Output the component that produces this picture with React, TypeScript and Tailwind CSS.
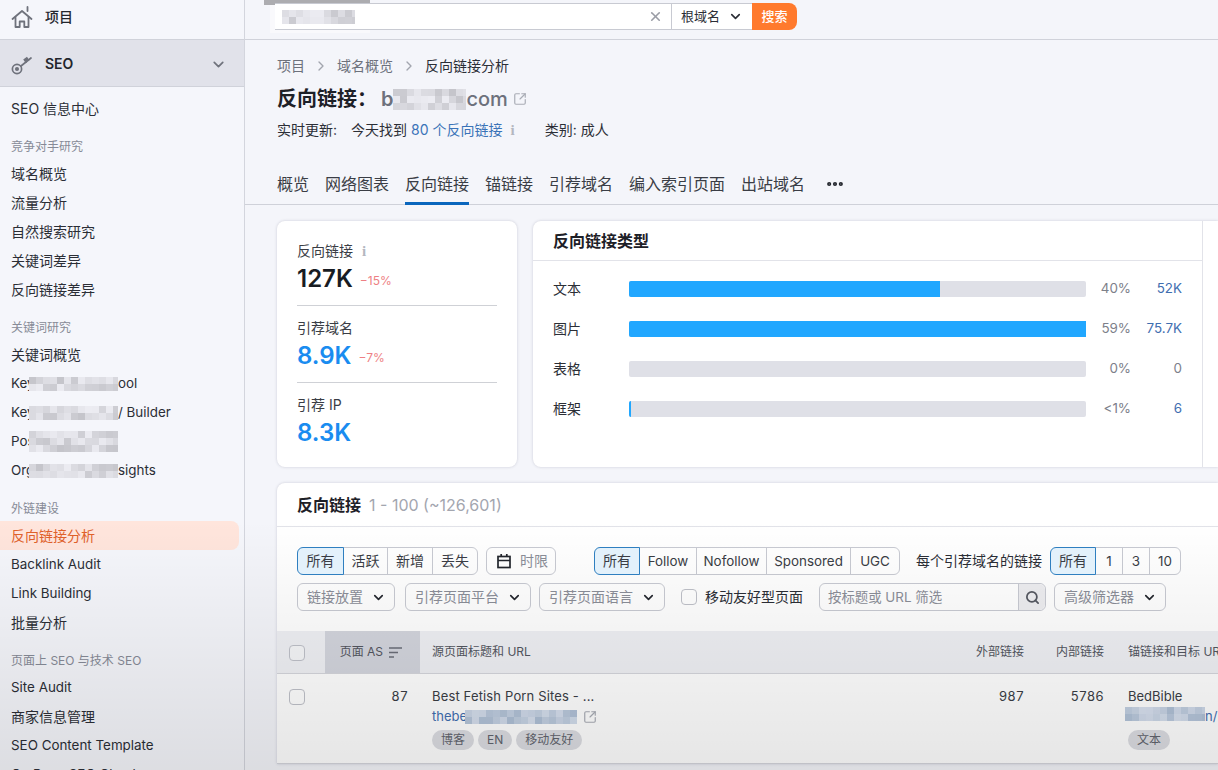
import { ChevronDown, ChevronRight, Ellipsis, Search, SquareArrowOutUpRight, X } from "lucide-react";
import type { ReactNode } from "react";

const FONT = "font-['Inter','Noto_Sans_CJK_SC',sans-serif]";

// pixelated censor blocks from the screenshot
function Mosaic({ w, h, seed = 1, tint = "gray" }: { w: number; h: number; seed?: number; tint?: "gray" | "blue" }) {
    const cols = Math.ceil(w / 7);
    const rows = Math.ceil(h / 7);
    const cells = [];
    for (let i = 0; i < cols * rows; i++) {
        const n = Math.abs(Math.sin((i + 1) * 12.9898 * seed) * 43758.5453) % 1;
        const shade = n * 40;
        const color = tint === "blue"
            ? `rgb(${175 + shade}, ${192 + shade * 0.8}, ${214 + shade * 0.6})`
            : `rgb(${196 + shade}, ${196 + shade}, ${202 + shade})`;
        cells.push(<span key={i} className="block h-[7px] w-[7px]" style={{ backgroundColor: color }} />);
    }
    return (
        <span className="inline-block shrink-0 overflow-hidden" style={{ width: w, height: h }}>
            <span className="flex flex-wrap" style={{ width: cols * 7 }}>
                {cells}
            </span>
        </span>
    );
}

function InfoMark() {
    return <span className="font-['Liberation_Serif',serif] text-[15px] font-bold leading-none text-[#b4b7c0]">i</span>;
}

function SideTitle({ children, className = "" }: { children: ReactNode; className?: string }) {
    return <div className={`flex h-[20px] shrink-0 items-center px-[11px] text-xs text-[#878b97] ${className}`}>{children}</div>;
}

function SideItem({ children, active, latin }: { children: ReactNode; active?: boolean; latin?: boolean }) {
    return (
        <div className={`flex h-[29px] shrink-0 items-center whitespace-nowrap px-[11px] ${latin ? "text-[13.4px]" : "text-sm"} ${active ? "mr-[5px] rounded-r-lg bg-[#ffe5dc] text-[#e0612a]" : "text-[#2b2e36]"}`}>
            {children}
        </div>
    );
}

function Censored({ head, tail, seed, h = 14 }: { head: string; tail?: string; seed: number; h?: number }) {
    return (
        <>
            <span className="w-[18px]">{head}</span>
            <Mosaic w={89} h={h} seed={seed} />
            {tail}
        </>
    );
}

function Sidebar() {
    return (
        <aside className="flex h-full w-[245px] shrink-0 flex-col overflow-hidden border-r border-[#d3d5dd] bg-[#f5f6fb]">
            <div className="flex h-[40px] shrink-0 items-center gap-[12px] border-b border-[#d0d2da] pb-[6px] pl-[11px]">
                <svg width="22" height="24" viewBox="0 0 22 24" fill="none" stroke="#6f727c" strokeWidth="1.8" strokeLinejoin="round" strokeLinecap="round">
                    <path d="M1.5 14 11 6l9.5 8" />
                    <path d="M4.5 12.5V22h4.2v-5.5h4.6V22h4.2v-9.5" />
                    <path d="M16.5 2v4" />
                </svg>
                <span className="text-sm font-medium text-[#23262d]">项目</span>
            </div>
            <div className="flex h-[47px] shrink-0 items-center gap-[12px] border-b border-[#d0d2da] bg-[#e1e2ea] pl-[11px] pr-[17px] pt-[2px]">
                <svg width="22" height="22" viewBox="0 0 22 22" fill="none" stroke="#6f727c" strokeWidth="1.7" strokeLinecap="round">
                    <circle cx="6" cy="16" r="4.6" />
                    <circle cx="6" cy="16" r="1.2" fill="#6f727c" />
                    <path d="m10 13 10-8" />
                    <path d="m15 9-1.6-2.2 2.4-1.8 1.6 2.2" fill="#6f727c" />
                </svg>
                <span className="text-sm font-semibold text-[#23262d]">SEO</span>
                <ChevronDown className="ml-auto h-[17px] w-[17px] text-[#6f727c]" strokeWidth={2.4} />
            </div>
            <div className="flex h-[44px] shrink-0 items-center px-[11px] text-sm text-[#2b2e36]">SEO 信息中心</div>
            <SideTitle className="mb-[2px] mt-[6px]">竞争对手研究</SideTitle>
            <SideItem>域名概览</SideItem>
            <SideItem>流量分析</SideItem>
            <SideItem>自然搜索研究</SideItem>
            <SideItem>关键词差异</SideItem>
            <SideItem>反向链接差异</SideItem>
            <SideTitle className="mb-[2px] mt-[14px]">关键词研究</SideTitle>
            <SideItem>关键词概览</SideItem>
            <SideItem latin><Censored head="Key" tail="ool" seed={2} /></SideItem>
            <SideItem latin><Censored head="Key" tail="/ Builder" seed={3} /></SideItem>
            <SideItem latin><Censored head="Pos" seed={4} h={21} /></SideItem>
            <SideItem latin><Censored head="Org" tail="sights" seed={5} /></SideItem>
            <SideTitle className="mb-[2px] mt-[14px]">外链建设</SideTitle>
            <SideItem active>反向链接分析</SideItem>
            <SideItem latin>Backlink Audit</SideItem>
            <SideItem latin>Link Building</SideItem>
            <SideItem>批量分析</SideItem>
            <SideTitle className="mb-[2px] mt-[14px]">页面上 SEO 与技术 SEO</SideTitle>
            <SideItem latin>Site Audit</SideItem>
            <SideItem>商家信息管理</SideItem>
            <SideItem latin>SEO Content Template</SideItem>
            <SideItem latin>On Page SEO Checker</SideItem>
        </aside>
    );
}

function TopBar() {
    return (
        <div className="relative flex h-[40px] shrink-0 items-start border-b border-[#d0d2da] pl-[30px] pt-[3px]">
            <div className="absolute left-[25px] top-0 h-[33px] w-[100px] bg-[#f9f9fc]" />
            <div className="absolute left-[19px] top-0 h-[5px] w-[106px] bg-[#acacb0]" />
            <div className="relative flex h-[27px] w-[397px] items-center border-y border-r border-[#c8cad2] bg-white pl-[7px] pr-[8px]">
                <Mosaic w={73} h={14} seed={6} />
                <X className="ml-auto h-[15px] w-[15px] text-[#9a9da6]" strokeWidth={2.6} />
            </div>
            <div className="flex h-[27px] w-[80px] items-center gap-[8px] border-y border-[#c8cad2] bg-white pl-[9px] text-[13px] text-[#2b2e36]">
                根域名
                <ChevronDown className="h-[15px] w-[15px]" strokeWidth={2.6} />
            </div>
            <div className="flex h-[27px] w-[45px] items-center justify-center rounded-r-lg bg-[#ff7a2d] text-[13px] font-medium text-white">搜索</div>
        </div>
    );
}

function PageHeader() {
    return (
        <div className="shrink-0 px-[32px]">
            <div className="mt-[16px] flex h-[20px] items-center gap-[8px] text-sm text-[#6d717c]">
                <span>项目</span>
                <ChevronRight className="h-[16px] w-[16px] text-[#a2a5ae]" />
                <span>域名概览</span>
                <ChevronRight className="h-[16px] w-[16px] text-[#a2a5ae]" />
                <span className="text-[#2b2e36]">反向链接分析</span>
            </div>
            <div className="mt-[8px] flex h-[30px] items-center text-xl font-semibold text-[#1d2027]">
                <span>反向链接：</span>
                <span className="ml-[4px] text-[#6d717c]">b</span>
                <Mosaic w={73} h={21} seed={7} />
                <span className="font-medium text-[#6d717c]">com</span>
                <SquareArrowOutUpRight className="ml-[5px] h-[14px] w-[14px] text-[#a9acb5]" />
            </div>
            <div className="mt-[6px] flex h-[20px] items-center text-sm text-[#2b2e36]">
                <span>实时更新:</span>
                <span className="ml-[14px]">今天找到</span>
                <span className="ml-[4px] text-[#3a73b8]">80 个反向链接</span>
                <span className="ml-[8px]"><InfoMark /></span>
                <span className="ml-[30px]">类别: 成人</span>
            </div>
        </div>
    );
}

function Tabs() {
    const tabs = ["概览", "网络图表", "反向链接", "锚链接", "引荐域名", "编入索引页面", "出站域名"];
    return (
        <div className="mt-[25px] flex h-[40px] shrink-0 items-stretch gap-[16px] border-b border-[#cfd1d9] px-[32px] text-base text-[#3a3d45]">
            {tabs.map((t) => (
                <div key={t} className={`-mb-px flex items-center border-b-[3px] ${t === "反向链接" ? "border-[#0a66bd]" : "border-transparent"}`}>
                    {t}
                </div>
            ))}
            <div className="-mb-px flex items-center border-b-[3px] border-transparent pl-[4px]">
                <Ellipsis className="h-[20px] w-[20px] text-[#23262d]" strokeWidth={3} />
            </div>
        </div>
    );
}

function Stat({ label, value, delta, blue, info }: { label: string; value: string; delta?: string; blue?: boolean; info?: boolean }) {
    return (
        <div>
            <div className="flex h-[20px] items-center gap-[9px] text-sm text-[#3a3d45]">
                {label}
                {info && <InfoMark />}
            </div>
            <div className="mt-[2px] flex h-[32px] items-center gap-[7px]">
                <span className={`text-2xl font-semibold ${blue ? "text-[#1a8cf0]" : "text-[#181c23]"}`}>{value}</span>
                {delta && <span className="mt-[4px] text-xs text-[#ee7f84]">{delta}</span>}
            </div>
        </div>
    );
}

function StatsCard() {
    return (
        <div className="flex h-[246px] w-[240px] shrink-0 flex-col rounded-lg bg-white px-[20px] pt-[20px] shadow-[0_0_3px_rgba(60,65,90,0.22)]">
            <Stat label="反向链接" value="127K" delta="−15%" info />
            <div className="mb-[12px] mt-[10px] h-px bg-[#cfd1d6]" />
            <Stat label="引荐域名" value="8.9K" delta="−7%" blue />
            <div className="mb-[12px] mt-[10px] h-px bg-[#cfd1d6]" />
            <Stat label="引荐 IP" value="8.3K" blue />
        </div>
    );
}

const linkTypes = [
    { label: "文本", fill: 68, pct: "40%", count: "52K", link: true },
    { label: "图片", fill: 100, pct: "59%", count: "75.7K", link: true },
    { label: "表格", fill: 0, pct: "0%", count: "0", link: false },
    { label: "框架", fill: 0.5, pct: "<1%", count: "6", link: true },
];

function TypesCard() {
    return (
        <div className="flex h-[246px] min-w-0 flex-1 rounded-l-lg bg-white shadow-[0_0_3px_rgba(60,65,90,0.22)]">
            <div className="w-[670px] shrink-0 border-r border-[#e2e3e9]">
                <div className="flex h-[40px] items-center border-b border-[#e2e3e9] px-[20px] text-base font-semibold text-[#1d2027]">反向链接类型</div>
                <div className="flex flex-col gap-[24px] pt-[20px]">
                    {linkTypes.map((r) => (
                        <div key={r.label} className="flex h-[16px] items-center pl-[20px] text-sm">
                            <span className="w-[76px] text-[#2b2e36]">{r.label}</span>
                            <div className="h-[16px] w-[457px] rounded-[2px] bg-[#dfe0e7]">
                                <div className="h-full rounded-l-[2px] bg-[#21a7ff]" style={{ width: `${r.fill}%` }} />
                            </div>
                            <span className="w-[45px] text-right text-[13.4px] text-[#7d808a]">{r.pct}</span>
                            <span className={`w-[51px] text-right text-[13.4px] ${r.link ? "text-[#3f6eb0]" : "text-[#7d808a]"}`}>{r.count}</span>
                        </div>
                    ))}
                </div>
            </div>
        </div>
    );
}

function Toggle({ items, widths }: { items: string[]; widths: string[] }) {
    return (
        <div className="flex h-[28px] rounded-md text-[#3a3d45]">
            {items.map((t, i) => (
                <div
                    key={t}
                    className={`flex items-center justify-center border ${/^[\x00-\x7f]+$/.test(t) ? "text-[13.4px]" : "text-sm"} ${widths[i]} ${i > 0 ? "-ml-px" : ""} ${i === 0 ? "z-10 rounded-l-md border-[#2f7fc0] bg-[#e3f1fb]" : "border-[#c8cad2]"} ${i === items.length - 1 ? "rounded-r-md" : ""}`}
                >
                    {t}
                </div>
            ))}
        </div>
    );
}

function Dropdown({ label, className }: { label: string; className: string }) {
    return (
        <div className={`flex h-[28px] items-center justify-between rounded-md border border-[#c8cad2] pl-[9px] pr-[8px] text-sm text-[#8b8e98] ${className}`}>
            {label}
            <ChevronDown className="h-[15px] w-[15px] text-[#23262d]" strokeWidth={2.6} />
        </div>
    );
}

function Tag({ children }: { children: ReactNode }) {
    return <span className="flex h-[20px] items-center rounded-full bg-[#dcdde2] px-[9px] text-xs text-[#61646e]">{children}</span>;
}

function Checkbox() {
    return <span className="block h-[16px] w-[16px] rounded-[4px] border border-[#bfc1c9] bg-white/40" />;
}

function BacklinksCard() {
    return (
        <div className="mt-[16px] rounded-tl-lg bg-white shadow-[0_0_3px_rgba(60,65,90,0.22)]">
            <div className="flex h-[44px] items-center gap-[8px] border-b border-[#e2e3e9] px-[20px]">
                <span className="text-base font-semibold text-[#1d2027]">反向链接</span>
                <span className="text-base text-[#a3a6af]">1 - 100 (~126,601)</span>
            </div>
            <div className="flex h-[104px] flex-col gap-[8px] px-[20px] pt-[20px]">
                <div className="flex items-center">
                    <Toggle items={["所有", "活跃", "新增", "丢失"]} widths={["w-[47px]", "w-[45px]", "w-[46px]", "w-[46px]"]} />
                    <div className="ml-[8px] flex h-[28px] w-[70px] items-center gap-[8px] rounded-md border border-[#c8cad2] pl-[9px] text-sm text-[#8b8e98]">
                        <svg width="16" height="16" viewBox="0 0 16 16" fill="none" stroke="#23262d" strokeWidth="1.7">
                            <rect x="2" y="3.5" width="12" height="11" />
                            <path d="M2 7.5h12M5.2 1v3M10.8 1v3" />
                        </svg>
                        时限
                    </div>
                    <div className="ml-[38px]">
                        <Toggle items={["所有", "Follow", "Nofollow", "Sponsored", "UGC"]} widths={["w-[46px]", "w-[58px]", "w-[71px]", "w-[85px]", "w-[50px]"]} />
                    </div>
                    <span className="ml-[16px] w-[134px] whitespace-nowrap text-sm text-[#2b2e36]">每个引荐域名的链接</span>
                    <Toggle items={["所有", "1", "3", "10"]} widths={["w-[46px]", "w-[28px]", "w-[28px]", "w-[32px]"]} />
                </div>
                <div className="flex items-center">
                    <Dropdown label="链接放置" className="w-[98px]" />
                    <Dropdown label="引荐页面平台" className="ml-[10px] w-[126px]" />
                    <Dropdown label="引荐页面语言" className="ml-[8px] w-[126px]" />
                    <span className="ml-[16px]"><Checkbox /></span>
                    <span className="ml-[8px] text-sm text-[#2b2e36]">移动友好型页面</span>
                    <div className="ml-[16px] flex h-[28px] w-[227px] items-center rounded-md border border-[#c8cad2] pl-[8px] text-[13.4px] text-[#8b8e98]">
                        按标题或 URL 筛选
                        <span className="ml-auto flex h-full w-[27px] items-center justify-center rounded-r-md border-l border-[#c8cad2] bg-[#ededf0]">
                            <Search className="h-[15px] w-[15px] text-[#555861]" strokeWidth={2.8} />
                        </span>
                    </div>
                    <Dropdown label="高级筛选器" className="ml-[8px] w-[112px]" />
                </div>
            </div>
            <div className="grid h-[43px] grid-cols-[48px_95px_524px_80px_80px_114px] items-stretch overflow-hidden border-b border-[#d5d6dc] bg-[#eff0f4] text-xs text-[#53565f]">
                <div className="flex items-center pl-[12px] pt-[2px]"><Checkbox /></div>
                <div className="flex items-center justify-end gap-[6px] bg-[#d3d5dd] pr-[18px]">
                    页面 AS
                    <svg width="13" height="11" viewBox="0 0 13 11" stroke="#6b6e78" strokeWidth="1.5" fill="none">
                        <path d="M0 1h13M0 5.5h9M0 10h5" />
                    </svg>
                </div>
                <div className="flex items-center pl-[12px]">源页面标题和 URL</div>
                <div className="flex items-center justify-end">外部链接</div>
                <div className="flex items-center justify-end">内部链接</div>
                <div className="flex items-center whitespace-nowrap pl-[24px]">锚链接和目标 URL</div>
            </div>
            <div className="grid h-[90px] grid-cols-[48px_95px_524px_80px_80px_114px] overflow-hidden border-b border-[#d5d6dc] pt-[13px] text-[13px] text-[#3a3d45]">
                <div className="pl-[12px] pt-[2px]"><Checkbox /></div>
                <div className="pr-[12px] text-right tracking-[0.5px]">87</div>
                <div className="pl-[12px]">
                    <div className="h-[20px] tracking-[0.15px]">Best Fetish Porn Sites - ...</div>
                    <div className="flex h-[20px] items-center text-[#3f6eb0]">
                        <span className="w-[33px]">thebe</span>
                        <Mosaic w={112} h={14} seed={8} tint="blue" />
                        <SquareArrowOutUpRight className="ml-[6px] h-[14px] w-[14px] text-[#a9acb5]" />
                    </div>
                    <div className="mt-[3px] flex gap-[4px]">
                        <Tag>博客</Tag>
                        <Tag>EN</Tag>
                        <Tag>移动友好</Tag>
                    </div>
                </div>
                <div className="text-right tracking-[0.5px]">987</div>
                <div className="text-right tracking-[0.5px]">5786</div>
                <div className="pl-[24px]">
                    <div className="h-[20px]">BedBible</div>
                    <div className="flex h-[20px] items-center whitespace-nowrap text-[#3f6eb0]">
                        <span className="-ml-[3px]"><Mosaic w={80} h={14} seed={9} tint="blue" /></span>
                        n/
                    </div>
                    <div className="mt-[3px] flex"><Tag>文本</Tag></div>
                </div>
            </div>
        </div>
    );
}

export default function App() {
    return (
        <div className={`relative flex h-[770px] w-[1218px] overflow-hidden bg-[#f4f5fa] ${FONT}`}>
            <Sidebar />
            <main className="flex min-w-0 flex-1 flex-col">
                <TopBar />
                <PageHeader />
                <Tabs />
                <div className="pl-[32px] pt-[16px]">
                    <div className="flex gap-[16px]">
                        <StatsCard />
                        <TypesCard />
                    </div>
                    <BacklinksCard />
                </div>
            </main>
            {/* the darkening that runs down the lower part of the shot */}
            <div className="pointer-events-none absolute inset-x-0 bottom-0 h-[250px] bg-gradient-to-b from-transparent to-black/10" />
        </div>
    );
}
